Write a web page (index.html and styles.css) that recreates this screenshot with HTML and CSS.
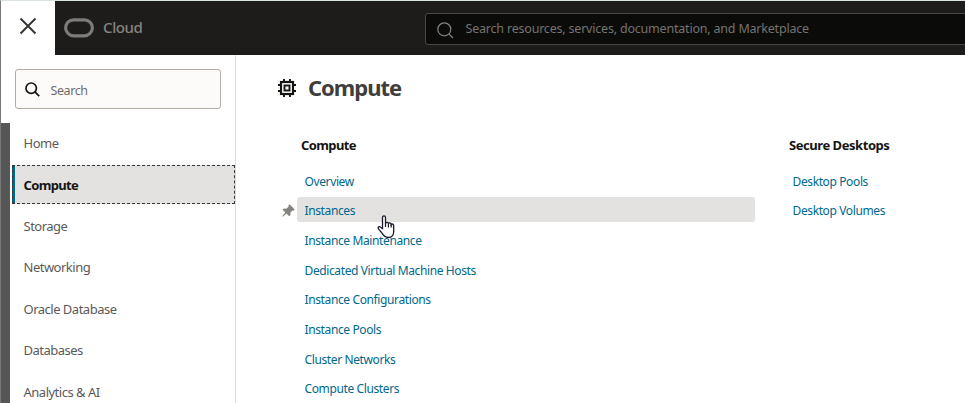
FILE: index.html
```html
<!DOCTYPE html>
<html lang="en">
<head>
<meta charset="utf-8">
<title>Compute</title>
<link rel="stylesheet" href="styles.css">
</head>
<body>
<div class="app">
  <header class="topbar">
    <button class="close" aria-label="Close"><svg width="18" height="18" viewBox="0 0 18 18"><path d="M1.5 1.5 16.5 16.5M16.5 1.5 1.5 16.5" fill="none" stroke="#393734" stroke-width="2"/></svg></button>
    <svg class="logo" width="30" height="20" viewBox="0 0 30 20"><rect x="1.6" y="1.800" width="26.8" height="16" rx="8" fill="none" stroke="#7c7b79" stroke-width="3.2"/></svg>
    <span class="brand">Cloud</span>
    <div class="global-search">
      <svg width="17" height="17" viewBox="0 0 17 17"><g fill="none" stroke="#858480" stroke-width="1.2"><circle cx="7.3" cy="7.3" r="6.5"/><path d="M11.9 11.9 16 16"/></g></svg>
      <span class="global-hint">Search resources, services, documentation, and Marketplace</span>
    </div>
  </header>
  <div class="body">
    <aside class="sidebar">
      <div class="search">
        <svg width="15" height="15" viewBox="0 0 15 15"><g fill="none" stroke="#161513" stroke-width="1.7"><circle cx="6.2" cy="6.2" r="5.2"/><path d="M9.9 9.9 14.2 14.2"/></g></svg>
        <span class="search-hint">Search</span>
      </div>
      <nav class="menu">
        <div class="rail"></div>
        <ul class="items">
          <li><span>Home</span></li>
          <li class="active"><span>Compute</span></li>
          <li><span>Storage</span></li>
          <li><span>Networking</span></li>
          <li><span>Oracle Database</span></li>
          <li><span>Databases</span></li>
          <li><span>Analytics &amp; AI</span></li>
        </ul>
      </nav>
    </aside>
    <main class="content">
      <div class="title">
        <svg width="18" height="18" viewBox="0 0 18 18"><g fill="none" stroke="#161513"><rect x="3" y="3" width="12" height="12" stroke-width="2.2"/><rect x="6.500" y="6.500" width="5" height="5" stroke-width="1.900"/><path stroke-width="1.900" d="M6 0v3M12 0v3M6 15v3M12 15v3M0 6h3M0 12h3M15 6h3M15 12h3"/></g></svg>
        <h1>Compute</h1>
      </div>
      <div class="columns">
        <section class="group">
          <h2>Compute</h2>
          <ul class="links">
            <li><a>Overview</a></li>
            <li class="hover"><svg class="pin" width="13" height="13" viewBox="0 0 13 13"><path d="M7.500.3 12.700 5.500 11.500 6.700 10.500 6.400 8.400 8.600 8.500 11 7.200 12.200 4.400 9.400 1 12.500.2 12.500.4 11.800 3.300 8.400.6 5.700 1.900 4.500 4.400 4.700 6.700 2.500 6.400 1.500Z" fill="#85827d"/></svg><a>Instances</a>
              <svg class="cursor" width="18" height="24" viewBox="0 0 18 24"><path d="M5.500 13.500V2.600C5.500.3 8.500.3 8.500 2.600V8.600C8.800 6.800 11.300 7 11.400 8.800 12 7.400 14.200 7.800 14.200 9.500 15 8.500 16.700 9.100 16.700 10.800V16.500C16.700 20.500 14.500 22.500 11.200 22.500 7.800 22.500 6.500 20.700 5 18.200L1.500 13.800C.4 12.100 2.300 11 3.600 12.200Z" fill="#fff" stroke="#1b1b2b" stroke-width="1.3"/><path d="M8.500 8v4M11.400 9v3.500M14.200 9.500v3" stroke="#1b1b2b" stroke-width="1.200"/></svg></li>
            <li><a>Instance Maintenance</a></li>
            <li><a>Dedicated Virtual Machine Hosts</a></li>
            <li><a>Instance Configurations</a></li>
            <li><a>Instance Pools</a></li>
            <li><a>Cluster Networks</a></li>
            <li><a>Compute Clusters</a></li>
          </ul>
        </section>
        <section class="group">
          <h2 class="wide">Secure Desktops</h2>
          <ul class="links">
            <li><a>Desktop Pools</a></li>
            <li><a>Desktop Volumes</a></li>
          </ul>
        </section>
      </div>
    </main>
  </div>
</div>
</body>
</html>
```
FILE: styles.css
```css
* { box-sizing: border-box; }
body { margin: 0; overflow: hidden; background: #fff; font-family: "Noto Sans", "Open Sans", sans-serif; }
ul, h1, h2 { margin: 0; padding: 0; list-style: none; }
svg { display: block; flex: none; }
.app { width: 965px; height: 403px; border-left: 1px solid #777; border-top: 1px solid #dbe3df; overflow: hidden; }
.topbar { height: 54px; display: flex; align-items: center; background: #1d1c1a; overflow: hidden; }
.close { flex: none; width: 54px; height: 54px; border: 0; padding: 0 0 5px; background: #fff; display: flex; align-items: center; justify-content: center; }
.logo { margin-left: 9px; }
.brand { flex: none; width: 322px; margin: -2px 0 0 9px; font-size: 15px; line-height: 20px; color: #858480; font-weight: 500; letter-spacing: -.4px; }
.global-search { flex: none; width: 560px; height: 32px; margin-top: 1px; padding-left: 11px; border: 1px solid #484745; border-radius: 3px; background: #0b0b09; display: flex; align-items: center; }
.global-search svg { margin-top: 4px; }
.global-hint { margin-left: 11.5px; font-size: 12.5px; color: #747370; white-space: nowrap; letter-spacing: -.2px; }
.body { display: flex; height: 348px; }
.sidebar { width: 235px; flex: none; border-right: 1px solid #dedddb; }
.search { width: 206px; height: 40px; margin: 14px 0 14px 14px; padding-left: 9px; border: 1px solid #b3aca4; border-radius: 3px; background: #fcfbfa; display: flex; align-items: center; }
.search svg { margin-top: 1px; }
.search-hint { margin: 2px 0 0 10.5px; font-size: 12.5px; color: #6d6b69; letter-spacing: -.4px; }
.menu { display: flex; height: 280px; }
.rail { flex: none; width: 9px; background: #565656; }
.items { flex: 1; margin-left: 2px; }
.items li { height: 41.5px; padding-left: 11.5px; display: flex; align-items: center; font-size: 13px; color: #5c5a58; letter-spacing: -.5px; white-space: nowrap; }
.items li:first-child { padding-bottom: 2px; }
.items li.active { width: 223px; height: 39px; margin: 0 0 1.5px; padding: 2px 0 0 10.5px; border: 1px dashed #393734; background: linear-gradient(90deg, #00688c 3px, #e3e2e0 3px) border-box; color: #161513; font-weight: 700; letter-spacing: -.65px; }
.content { flex: 1; padding: 17px 0 0 42px; }
.title { display: flex; align-items: center; height: 30px; }
.title svg { margin-top: 1px; }
h1 { margin-left: 12px; font-size: 22px; line-height: 30px; color: #403e3c; letter-spacing: -1px; }
.columns { display: grid; grid-template-columns: 488px 1fr; margin: 32px 0 0 23px; }
h2 { font-size: 13px; line-height: 22px; color: #161513; letter-spacing: -.6px; }
h2.wide { letter-spacing: -.45px; }
.links { margin: 11px 0 0 -4px; }
.links li { position: relative; width: 458px; height: 25px; margin-bottom: 4.65px; padding: 3.5px 0 0 7.5px; display: flex; align-items: center; border-radius: 3px; font-size: 12px; color: #00688c; letter-spacing: -.38px; white-space: nowrap; }
.links .hover { background: #e3e2e0; }
.pin { position: absolute; left: -15px; top: 7px; }
.cursor { position: absolute; z-index: 2; left: 80px; top: 18px; }
```
